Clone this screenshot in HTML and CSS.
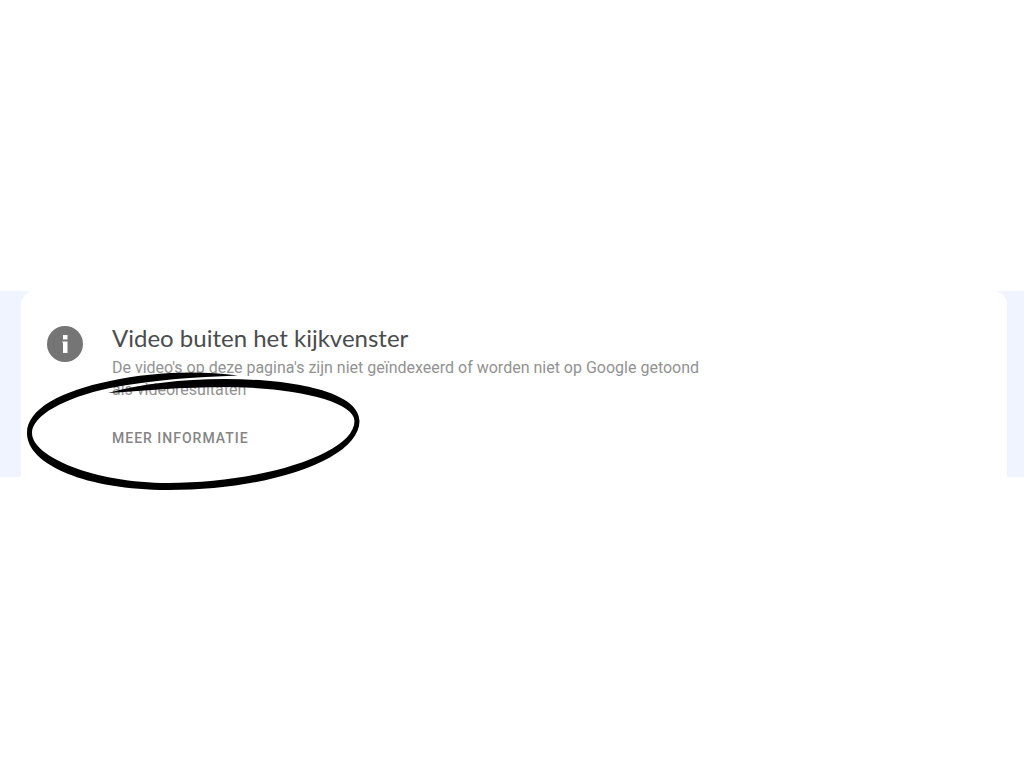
FILE: index.html
```html
<!DOCTYPE html>
<html lang="nl">
  <head>
    <meta charset="utf-8">
    <title>Video buiten het kijkvenster</title>
    <link rel="stylesheet" href="styles.css">
  </head>
  <body>
    <main class="band">
      <section class="card">
        <svg class="info-icon" viewBox="0 0 36 36" aria-hidden="true">
          <circle cx="18" cy="18" r="18" fill="#757575"/>
          <path d="M16 9h4.500v4.500H16zM15.500 15.500h5V27H16V17h-.500z" fill="#fff"/>
        </svg>
        <div class="content">
          <h1 class="title">Video buiten het kijkvenster</h1>
          <p class="text">De video's op deze pagina's zijn niet geïndexeerd of worden niet op Google getoond als videoresultaten</p>
          <a class="more" href="#">MEER INFORMATIE</a>
        </div>
        <svg class="ring" viewBox="0 0 340 124" aria-hidden="true">
          <path d="M217 8.500C176 3 130 5 89 14C40 24 6 42 6 66C6 98 66 123 147 123C250 123 338.500 92 338.500 54C338.500 26 276 12 204 12C160 12 120 17 87 26C120 24 160 20 204 20C268 20 333.500 33 333.500 54C333.500 87 240 116 147 116C74 116 11 90 11 66C11 49 42 31 89 21C130 13 174 10 217 8.500Z"/>
        </svg>
      </section>
    </main>
  </body>
</html>
```

FILE: styles.css
```css
* {
  box-sizing: border-box;
}
body {
  margin: 0;
  min-height: 100vh;
  display: flex;
  flex-direction: column;
  justify-content: center;
  background-color: #fff;
  font-family: Roboto, sans-serif;
}
.band {
  padding: 0 17px 0 21px;
  background-color: #f0f4fe;
}
.card {
  position: relative;
  display: flex;
  align-items: flex-start;
  gap: 29px;
  padding: 35px 26px 28px;
  background-color: #fff;
  border-radius: 14px 14px 0 0;
}
.info-icon {
  flex: none;
  width: 36px;
  height: 36px;
}
.content {
  max-width: 610px;
}
.title {
  margin: 0 0 7px;
  color: #4a4c4e;
  font-family: Lato, sans-serif;
  font-size: 24px;
  font-weight: 400;
  line-height: 24px;
}
.text {
  margin: 0 0 26px;
  color: #929292;
  font-size: 16px;
  line-height: 22px;
}
.more {
  display: block;
  color: #858585;
  font-size: 14px;
  font-weight: 500;
  line-height: 22px;
  letter-spacing: 1px;
  text-decoration: none;
}
.ring {
  position: absolute;
  top: 76px;
  left: 0;
  width: 340px;
  height: 124px;
}
```
